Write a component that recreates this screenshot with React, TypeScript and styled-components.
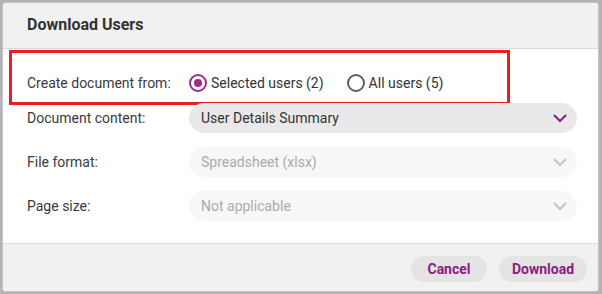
import React from "react";
import styled, { createGlobalStyle } from "styled-components";

const Global = createGlobalStyle`
  html, body { margin: 0; padding: 0; }
  body {
    background: #b4b4b4;
    font-family: Roboto, "Liberation Sans", Arial, sans-serif;
    width: 602px;
    height: 294px;
    overflow: hidden;
  }
`;

const Dialog = styled.div`
  box-sizing: border-box;
  margin: 2px 3px 2px 2px;
  width: 597px;
  height: 290px;
  background: #fff;
  border: 1px solid #c4c4c4;
  border-radius: 4px;
  overflow: hidden;
  display: flex;
  flex-direction: column;
`;

const Header = styled.div`
  box-sizing: border-box;
  height: 46px;
  flex: none;
  background: #f1f1f1;
  border-bottom: 1px solid #dcdcdc;
  display: flex;
  align-items: center;
  padding: 0 0 2px 24px;
  font-size: 16px;
  font-weight: 700;
  color: #333;
`;

const Body = styled.div`
  flex: 1;
  display: flex;
  flex-direction: column;
  padding: 1px 0 0 6px;
`;

const Highlight = styled.div`
  box-sizing: border-box;
  width: 501px;
  height: 55px;
  border: 3px solid #ec1c24;
  padding: 21px 0 0 15px;
`;

const Row = styled.div<{ $first?: boolean }>`
  display: flex;
  align-items: center;
  height: ${(p) => (p.$first ? 18 : 30)}px;
  margin-top: ${(p) => (p.$first ? 0 : 14)}px;
  padding-left: ${(p) => (p.$first ? 0 : 18)}px;
`;

const FieldRows = styled.div`
  display: flex;
  flex-direction: column;
  margin-top: -16px;
`;

const Label = styled.div`
  width: 162px;
  flex: none;
  font-size: 14px;
  color: #3a3a3a;
`;

const RadioGroup = styled.div`
  display: flex;
  align-items: center;
`;

const RadioOption = styled.label`
  display: flex;
  align-items: center;
  gap: 4px;
  font-size: 14px;
  color: #333;
  margin-right: 23px;
  white-space: nowrap;
`;

const RadioCircle = styled.span<{ $checked?: boolean }>`
  box-sizing: border-box;
  width: 18px;
  height: 18px;
  border-radius: 50%;
  border: 2px solid ${(p) => (p.$checked ? "#9a2b8b" : "#5f5f5f")};
  display: flex;
  align-items: center;
  justify-content: center;
  &::after {
    content: "";
    display: ${(p) => (p.$checked ? "block" : "none")};
    width: 8px;
    height: 8px;
    border-radius: 50%;
    background: #9a2b8b;
  }
`;

const Select = styled.div<{ $disabled?: boolean }>`
  box-sizing: border-box;
  width: 388px;
  height: 30px;
  border-radius: 15px;
  background: ${(p) => (p.$disabled ? "#f7f7f7" : "#e9e9e9")};
  color: ${(p) => (p.$disabled ? "#ababab" : "#333")};
  font-size: 14px;
  display: flex;
  align-items: center;
  justify-content: space-between;
  padding: 0 10px 0 12px;
`;

const Footer = styled.div`
  box-sizing: border-box;
  height: 48px;
  flex: none;
  background: #f1f1f1;
  border-top: 1px solid #dcdcdc;
  display: flex;
  justify-content: flex-end;
  align-items: center;
  gap: 12px;
  padding: 2px 11px 0 0;
`;

const Button = styled.button<{ $w: number }>`
  width: ${(p) => p.$w}px;
  height: 26px;
  border: none;
  border-radius: 13px;
  background: #e4e4e4;
  color: #8c1b80;
  font-family: Roboto, "Liberation Sans", Arial, sans-serif;
  font-size: 14px;
  font-weight: 700;
  padding: 0;
`;

const Chevron = ({ color }: { color: string }) => (
  <svg width="14" height="9" viewBox="0 0 14 9">
    <path d="M1.5 1.5 L7 7 L12.5 1.5" fill="none" stroke={color} strokeWidth="2" strokeLinecap="round" />
  </svg>
);

export default function App() {
  return (
    <>
      <Global />
      <Dialog>
        <Header>Download Users</Header>
        <Body>
          <Highlight>
            <Row $first>
              <Label>Create document from:</Label>
              <RadioGroup>
                <RadioOption>
                  <RadioCircle $checked />
                  Selected users (2)
                </RadioOption>
                <RadioOption>
                  <RadioCircle />
                  All users (5)
                </RadioOption>
              </RadioGroup>
            </Row>
          </Highlight>
          <FieldRows>
            <Row>
              <Label>Document content:</Label>
              <Select>
                User Details Summary
                <Chevron color="#8c1b80" />
              </Select>
            </Row>
            <Row>
              <Label>File format:</Label>
              <Select $disabled>
                Spreadsheet (xlsx)
                <Chevron color="#c4c4c4" />
              </Select>
            </Row>
            <Row>
              <Label>Page size:</Label>
              <Select $disabled>
                Not applicable
                <Chevron color="#c4c4c4" />
              </Select>
            </Row>
          </FieldRows>
        </Body>
        <Footer>
          <Button $w={76}>Cancel</Button>
          <Button $w={88}>Download</Button>
        </Footer>
      </Dialog>
    </>
  );
}
